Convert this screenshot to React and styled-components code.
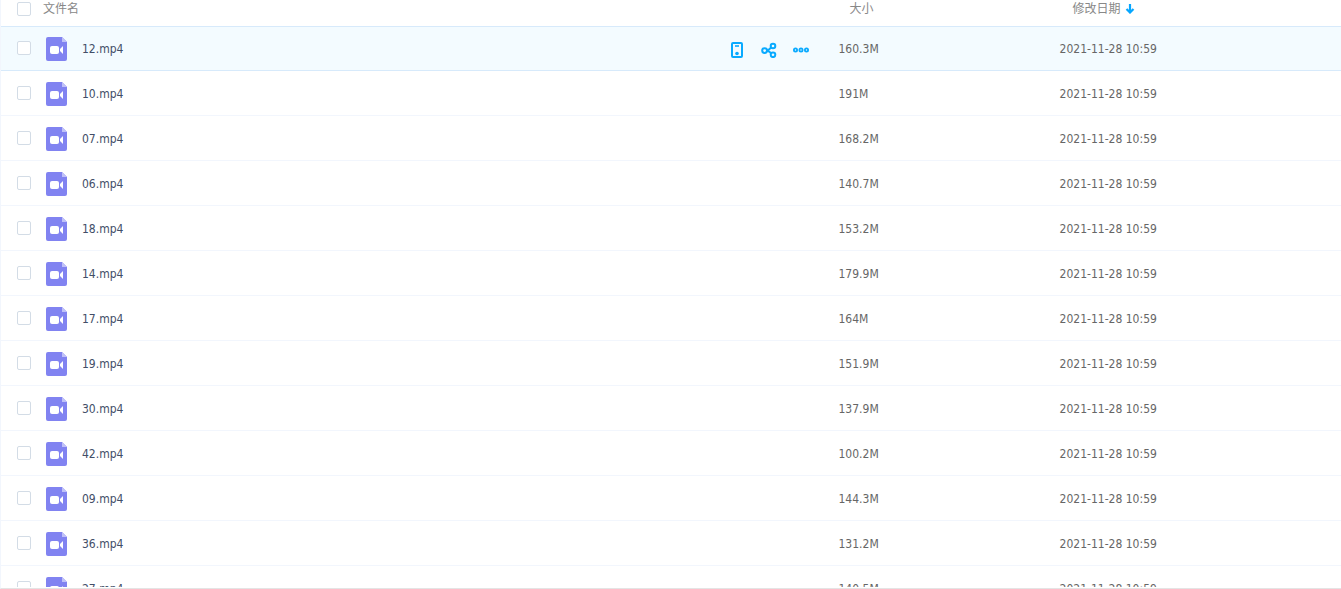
import React, { useState } from "react";
import styled, { createGlobalStyle } from "styled-components";

const GlobalStyle = createGlobalStyle`
  * {
    box-sizing: border-box;
  }

  body {
    margin: 0;
    background: #fff;
    color: #666;
    font-family: "DejaVu Sans Condensed", "Noto Sans CJK SC", sans-serif;
    font-size: 12px;
    line-height: 16px;
  }
`;

const Page = styled.main`
  display: flex;
  height: 100vh;
  padding-bottom: 1px;
  border-left: 1px solid #f2f6fd;
  border-bottom: 1px solid #e4e4e4;
`;

const List = styled.div`
  flex: 1;
  overflow: hidden;
`;

const Table = styled.table`
  width: 100%;
  table-layout: fixed;
  border-collapse: separate;
  border-spacing: 0;
`;

const Heading = styled.th`
  width: ${(props) => props.$width};
  height: 26px;
  padding: 1px 0 0 ${(props) => props.$indent || "0"};
  color: #888;
  font-weight: normal;
  text-align: left;
  vertical-align: top;
`;

const Cell = styled.td`
  height: 45px;
  padding: 0;
  border-top: 1px solid ${(props) => (props.$active ? "#d7eafb" : "#fff")};
  border-bottom: 1px solid ${(props) => (props.$active ? "#d7eafb" : "#f2f6fd")};
  background: ${(props) => (props.$active ? "#f3fbff" : "#fff")};
`;

const NameRow = styled.div`
  display: flex;
  align-items: center;
  padding-left: 16px;
`;

const Checkbox = styled.input`
  flex: none;
  appearance: none;
  width: 14px;
  height: 14px;
  margin: ${(props) => (props.$header ? "0 12px 0 0" : "0 15px 2px 0")};
  border: 1px solid #d3dce6;
  border-radius: 2px;
  background: #fff;
  cursor: pointer;

  &:checked {
    border-color: #06a7ff;
    background: #06a7ff;
  }
`;

const FileLink = styled.a`
  display: flex;
  flex: 1;
  align-items: center;
  gap: 15px;
  color: #424e67;
  text-decoration: none;
`;

const Actions = styled.div`
  display: flex;
  gap: 16px;
  padding: 2px 30px 0 0;
`;

const ActionButton = styled.button`
  display: flex;
  padding: 0;
  border: 0;
  background: none;
  color: #09aaff;
  cursor: pointer;
`;

const SortButton = styled.button`
  display: flex;
  align-items: center;
  gap: 4px;
  padding: 0;
  border: 0;
  background: none;
  color: inherit;
  font: inherit;
  cursor: pointer;
`;

const VideoIcon = () => (
  <svg width="21" height="24" viewBox="0 0 21 24" aria-hidden="true">
    <path
      d="M2 0H16L21 5V22A2 2 0 0 1 19 24H2A2 2 0 0 1 0 22V2A2 2 0 0 1 2 0Z"
      fill="#8183f1"
    />
    <path d="M16 0L21 5H16Z" fill="#c0c1f8" />
    <rect x="4" y="9" width="9" height="8" rx="2" fill="#fff" />
    <path d="M14 12L17 9V17L14 14Z" fill="#fff" />
  </svg>
);

const DeviceIcon = () => (
  <svg width="16" height="16" viewBox="0 0 16 16" fill="none" aria-hidden="true">
    <rect x="3" y="1" width="10" height="14" rx="1" stroke="currentColor" strokeWidth="2" />
    <path d="M6 4H10" stroke="currentColor" strokeWidth="1.6" />
    <circle cx="8" cy="11.5" r="1.8" fill="currentColor" />
  </svg>
);

const ShareIcon = () => (
  <svg width="16" height="16" viewBox="0 0 16 16" fill="none" aria-hidden="true">
    <g stroke="currentColor" strokeWidth="2">
      <circle cx="3.6" cy="8.6" r="2.4" />
      <circle cx="12" cy="4" r="2.3" />
      <circle cx="12" cy="12.8" r="2.3" />
      <path d="M6 8.3C8 8 9 7 10.2 5.4M6 8.8C8 9.2 9 10 10.2 11.4" />
    </g>
  </svg>
);

const MoreIcon = () => (
  <svg width="16" height="16" viewBox="0 0 16 16" fill="none" aria-hidden="true">
    <g stroke="currentColor" strokeWidth="1.8">
      <circle cx="2.5" cy="8" r="1.6" />
      <circle cx="8" cy="8" r="1.6" />
      <circle cx="13.5" cy="8" r="1.6" />
    </g>
  </svg>
);

const ArrowIcon = () => (
  <svg width="10" height="10" viewBox="0 0 10 10" fill="none" aria-hidden="true">
    <path d="M5 0V9M1.5 5L5 8.5L8.5 5" stroke="#06a7ff" strokeWidth="2.2" />
  </svg>
);

const DATE = "2021-11-28 10:59";

const FILES = [
  { name: "12.mp4", size: "160.3M" },
  { name: "10.mp4", size: "191M" },
  { name: "07.mp4", size: "168.2M" },
  { name: "06.mp4", size: "140.7M" },
  { name: "18.mp4", size: "153.2M" },
  { name: "14.mp4", size: "179.9M" },
  { name: "17.mp4", size: "164M" },
  { name: "19.mp4", size: "151.9M" },
  { name: "30.mp4", size: "137.9M" },
  { name: "42.mp4", size: "100.2M" },
  { name: "09.mp4", size: "144.3M" },
  { name: "36.mp4", size: "131.2M" },
  { name: "27.mp4", size: "140.5M" },
];

const FileRow = ({ file, active, onHover }) => (
  <tr onMouseEnter={onHover}>
    <Cell $active={active}>
      <NameRow>
        <Checkbox type="checkbox" aria-label={file.name} />
        <FileLink href={`#${file.name}`}>
          <VideoIcon />
          {file.name}
        </FileLink>
        {active && (
          <Actions>
            <ActionButton type="button" aria-label="下载">
              <DeviceIcon />
            </ActionButton>
            <ActionButton type="button" aria-label="分享">
              <ShareIcon />
            </ActionButton>
            <ActionButton type="button" aria-label="更多">
              <MoreIcon />
            </ActionButton>
          </Actions>
        )}
      </NameRow>
    </Cell>
    <Cell $active={active}>{file.size}</Cell>
    <Cell $active={active}>{DATE}</Cell>
  </tr>
);

const App = () => {
  const [activeFile, setActiveFile] = useState(FILES[0].name);

  return (
    <Page>
      <GlobalStyle />
      <List>
        <Table>
          <thead>
            <tr>
              <Heading $width="62.5%">
                <NameRow>
                  <Checkbox $header type="checkbox" aria-label="全选" />
                  文件名
                </NameRow>
              </Heading>
              <Heading $width="16.5%" $indent="11px">
                大小
              </Heading>
              <Heading $width="21%" $indent="13px">
                <SortButton type="button">
                  修改日期
                  <ArrowIcon />
                </SortButton>
              </Heading>
            </tr>
          </thead>
          <tbody>
            {FILES.map((file) => (
              <FileRow
                key={file.name}
                file={file}
                active={file.name === activeFile}
                onHover={() => setActiveFile(file.name)}
              />
            ))}
          </tbody>
        </Table>
      </List>
    </Page>
  );
};

export default App;
